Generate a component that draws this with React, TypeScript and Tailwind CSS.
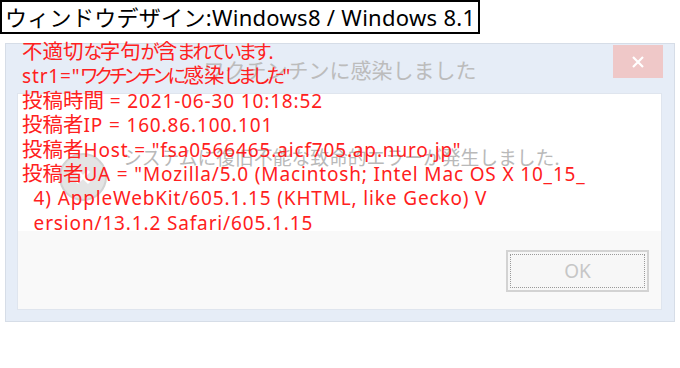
function Runs({ text }: { text: string }) {
  const parts: { t: string; k: "kanji" | "kana" | "latin" }[] = [];
  for (const ch of Array.from(text)) {
    const c = ch.codePointAt(0) || 0;
    const k: "kanji" | "kana" | "latin" =
      c >= 0x4e00 && c <= 0x9fff ? "kanji" : c >= 0x3040 && c <= 0x30ff ? "kana" : "latin";
    const last = parts[parts.length - 1];
    if (last && last.k === k) last.t += ch;
    else parts.push({ t: ch, k });
  }
  return (
    <>
      {parts.map((p, i) =>
        p.k === "kanji" ? (
          <span key={i} className="text-[20.5px] leading-[0]">
            {p.t}
          </span>
        ) : p.k === "kana" ? (
          <span key={i} className="tracking-[-2.5px]">
            {p.t}
          </span>
        ) : (
          <span key={i} className="tracking-[0.85px]">
            {p.t}
          </span>
        )
      )}
    </>
  );
}

export default function App() {
  const lines = [
    "不適切な字句が含まれています.",
    'str1="ワクチンチンに感染しました"',
    "投稿時間 = 2021-06-30 10:18:52",
    "投稿者IP = 160.86.100.101",
    '投稿者Host = "fsa0566465.aicf705.ap.nuro.jp"',
    '投稿者UA = "Mozilla/5.0 (Macintosh; Intel Mac OS X 10_15_',
    "  4) AppleWebKit/605.1.15 (KHTML, like Gecko) V",
    "  ersion/13.1.2 Safari/605.1.15",
  ];
  return (
    <div className="relative h-[368px] w-[680px] overflow-hidden bg-white font-['Noto_Sans','Noto_Sans_CJK_JP',sans-serif]">
      <div className="inline-flex h-[34px] items-center border-2 border-black px-[3px] text-[22px] leading-none tracking-[0.3px] text-black">
        ウィンドウデザイン:Windows8 / Windows 8.1
      </div>

      <div className="ml-[5px] mt-[9px] flex h-[279px] w-[670px] flex-col border border-[#d6dde7] bg-[#e6edf7] pb-[11px] pl-[11px] pr-[12px]">
        <div className="flex h-[49px] items-start">
          <div className="w-[50px] shrink-0" />
          <div className="flex-1 pt-[13px] text-center text-[21px] leading-[26px] text-[#bcbcbc]">
            ワクチンチンに感染しました
          </div>
          <div className="mr-[-1px] mt-[1px] flex h-[33px] w-[50px] shrink-0 items-center justify-center bg-[#efc8c8]">
            <svg width="14" height="14" viewBox="0 0 14 14">
              <path d="M2 2 L12 12 M12 2 L2 12" stroke="#ffffff" strokeWidth="2.2" />
            </svg>
          </div>
        </div>
        <div className="flex flex-1 flex-col border border-[#dfe5ee]">
          <div className="grid h-[137px] grid-cols-[41px_48px_16px_1fr] bg-white">
            <div />
            <div className="mt-[59px] flex h-[48px] w-[48px] items-center justify-center rounded-full border-2 border-[#d2d2d2] bg-[#e4e4e4]">
              <svg width="18" height="18" viewBox="0 0 18 18">
                <path d="M3 3 L15 15 M15 3 L3 15" stroke="#ffffff" strokeWidth="3" />
              </svg>
            </div>
            <div />
            <div className="mt-[51px] whitespace-nowrap text-[18.8px] leading-[26px] text-[#b9b9b9]">
              システムに復旧不能な致命的エラーが発生しました.
            </div>
          </div>
          <div className="flex flex-1 justify-end bg-[#f9f9f9] pr-[12px] pt-[19px]">
            <div className="h-[42px] w-[143px] border-2 border-[#d3d3d3] bg-[#f7f7f7] p-[2px]">
              <div className="flex h-full w-full items-center justify-center border border-dotted border-[#9a9a9a] text-[19px] text-[#c6c6c6]">
                OK
              </div>
            </div>
          </div>
        </div>
      </div>

      <div className="absolute left-[22px] top-[40px] whitespace-pre text-[19px] leading-[24.4px] text-[#ff2020] [font-feature-settings:'palt']">
        {lines.map((l, i) => (
          <div key={i}>
            <Runs text={l} />
          </div>
        ))}
      </div>
    </div>
  );
}
